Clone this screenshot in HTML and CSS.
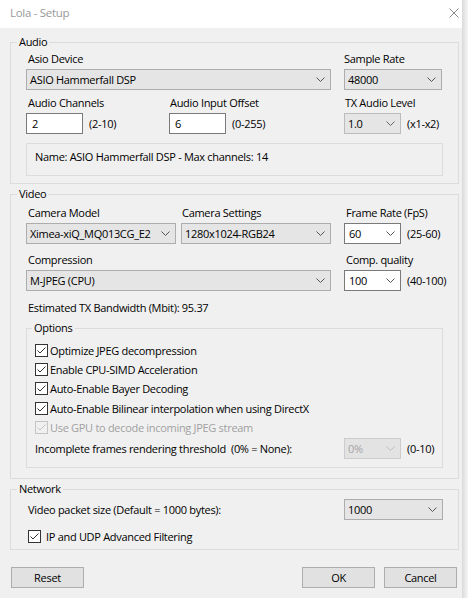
FILE: index.html
```html
<!DOCTYPE html>
<html>
<head>
<meta charset="utf-8">
<title>Lola - Setup</title>
<link rel="stylesheet" href="styles.css">
</head>
<body>
<div class="window">
  <div class="titlebar">
    <span class="title">Lola - Setup</span>
    <svg class="close" width="10" height="10" viewBox="0 0 10 10"><path d="M0.5 0.5 L9.5 9.5 M9.5 0.5 L0.5 9.5" stroke="#8a8a8a" stroke-width="1" fill="none"/></svg>
  </div>
  <div class="content">

    <section class="group audio">
      <div class="group-title">Audio</div>
      <div class="row a1">
        <div class="field w318">
          <div class="lbl">Asio Device</div>
          <div class="combo w305"><span>ASIO Hammerfall DSP</span><svg class="chev" width="9" height="5" viewBox="0 0 9 5"><polyline points="0.5,0.5 4.5,4.5 8.5,0.5" fill="none" stroke="#555"/></svg></div>
        </div>
        <div class="field">
          <div class="lbl l0">Sample Rate</div>
          <div class="combo w98"><span>48000</span><svg class="chev" width="9" height="5" viewBox="0 0 9 5"><polyline points="0.5,0.5 4.5,4.5 8.5,0.5" fill="none" stroke="#555"/></svg></div>
        </div>
      </div>
      <div class="row a2">
        <div class="field w143">
          <div class="lbl">Audio Channels</div>
          <div class="inline"><div class="textbox">2</div><span class="suffix">(2-10)</span></div>
        </div>
        <div class="field w175">
          <div class="lbl l1">Audio Input Offset</div>
          <div class="inline"><div class="textbox">6</div><span class="suffix">(0-255)</span></div>
        </div>
        <div class="field">
          <div class="lbl l1">TX Audio Level</div>
          <div class="inline"><div class="combo w57 soft"><span>1.0</span><svg class="chev" width="9" height="5" viewBox="0 0 9 5"><polyline points="0.5,0.5 4.5,4.5 8.5,0.5" fill="none" stroke="#666"/></svg></div><span class="suffix">(x1-x2)</span></div>
        </div>
      </div>
      <div class="info">Name: ASIO Hammerfall DSP - Max channels: 14</div>
    </section>

    <section class="group video">
      <div class="group-title">Video</div>
      <div class="row v1">
        <div class="field w155">
          <div class="lbl">Camera Model</div>
          <div class="combo w150"><span>Ximea-xiQ_MQ013CG_E2</span><svg class="chev" width="9" height="5" viewBox="0 0 9 5"><polyline points="0.5,0.5 4.5,4.5 8.5,0.5" fill="none" stroke="#555"/></svg></div>
        </div>
        <div class="field w163">
          <div class="lbl l1">Camera Settings</div>
          <div class="combo w150"><span>1280x1024-RGB24</span><svg class="chev" width="9" height="5" viewBox="0 0 9 5"><polyline points="0.5,0.5 4.5,4.5 8.5,0.5" fill="none" stroke="#555"/></svg></div>
        </div>
        <div class="field">
          <div class="lbl l2">Frame Rate (FpS)</div>
          <div class="inline"><div class="combo w57 edit"><span>60</span><svg class="chev" width="9" height="5" viewBox="0 0 9 5"><polyline points="0.5,0.5 4.5,4.5 8.5,0.5" fill="none" stroke="#555"/></svg></div><span class="suffix">(25-60)</span></div>
        </div>
      </div>
      <div class="row v2">
        <div class="field w318">
          <div class="lbl">Compression</div>
          <div class="combo w305"><span>M-JPEG (CPU)</span><svg class="chev" width="9" height="5" viewBox="0 0 9 5"><polyline points="0.5,0.5 4.5,4.5 8.5,0.5" fill="none" stroke="#555"/></svg></div>
        </div>
        <div class="field">
          <div class="lbl l2">Comp. quality</div>
          <div class="inline"><div class="combo w57 edit"><span>100</span><svg class="chev" width="9" height="5" viewBox="0 0 9 5"><polyline points="0.5,0.5 4.5,4.5 8.5,0.5" fill="none" stroke="#555"/></svg></div><span class="suffix">(40-100)</span></div>
        </div>
      </div>
      <div class="estimate">Estimated TX Bandwidth (Mbit): 95.37</div>

      <section class="group options">
        <div class="group-title">Options</div>
        <div class="checks">
          <div class="check-row"><svg class="cb" width="13" height="13" viewBox="0 0 13 13"><rect x="0.5" y="0.5" width="12" height="12" fill="#fff" stroke="#333"/><polyline points="2.5,6.5 5,9 10.5,3.5" fill="none" stroke="#333" stroke-width="1"/></svg><span>Optimize JPEG decompression</span></div>
          <div class="check-row"><svg class="cb" width="13" height="13" viewBox="0 0 13 13"><rect x="0.5" y="0.5" width="12" height="12" fill="#fff" stroke="#333"/><polyline points="2.5,6.5 5,9 10.5,3.5" fill="none" stroke="#333" stroke-width="1"/></svg><span>Enable CPU-SIMD Acceleration</span></div>
          <div class="check-row"><svg class="cb" width="13" height="13" viewBox="0 0 13 13"><rect x="0.5" y="0.5" width="12" height="12" fill="#fff" stroke="#333"/><polyline points="2.5,6.5 5,9 10.5,3.5" fill="none" stroke="#333" stroke-width="1"/></svg><span>Auto-Enable Bayer Decoding</span></div>
          <div class="check-row"><svg class="cb" width="13" height="13" viewBox="0 0 13 13"><rect x="0.5" y="0.5" width="12" height="12" fill="#fff" stroke="#333"/><polyline points="2.5,6.5 5,9 10.5,3.5" fill="none" stroke="#333" stroke-width="1"/></svg><span>Auto-Enable Bilinear interpolation when using DirectX</span></div>
          <div class="check-row disabled"><svg class="cb" width="13" height="13" viewBox="0 0 13 13"><rect x="0.5" y="0.5" width="12" height="12" fill="#f0f0f0" stroke="#c4c4c4"/><polyline points="2.5,6.5 5,9 10.5,3.5" fill="none" stroke="#c4c4c4" stroke-width="1"/></svg><span>Use GPU to decode incoming JPEG stream</span></div>
        </div>
        <div class="threshold">
          <span class="th-label">Incomplete frames rendering threshold&nbsp; (0% = None):</span>
          <div class="combo w57 off"><span>0%</span><svg class="chev" width="9" height="5" viewBox="0 0 9 5"><polyline points="0.5,0.5 4.5,4.5 8.5,0.5" fill="none" stroke="#bdbdbd"/></svg></div>
          <span class="suffix">(0-10)</span>
        </div>
      </section>
    </section>

    <section class="group network">
      <div class="group-title">Network</div>
      <div class="packet">
        <span class="pk-label">Video packet size (Default = 1000 bytes):</span>
        <div class="combo w99"><span>1000</span><svg class="chev" width="9" height="5" viewBox="0 0 9 5"><polyline points="0.5,0.5 4.5,4.5 8.5,0.5" fill="none" stroke="#555"/></svg></div>
      </div>
      <div class="check-row net"><svg class="cb" width="13" height="13" viewBox="0 0 13 13"><rect x="0.5" y="0.5" width="12" height="12" fill="#fff" stroke="#333"/><polyline points="2.5,6.5 5,9 10.5,3.5" fill="none" stroke="#333" stroke-width="1"/></svg><span>IP and UDP Advanced Filtering</span></div>
    </section>

    <div class="buttons">
      <div class="btn">Reset</div>
      <div class="btn ok">OK</div>
      <div class="btn cancel">Cancel</div>
    </div>
  </div>
</div>
<div class="edge"></div>
</body>
</html>
```
FILE: styles.css
```css
html, body {
  margin: 0;
  padding: 0;
}
body {
  width: 468px;
  height: 598px;
  overflow: hidden;
  background: #f0f0f0;
  display: flex;
  font-family: "Open Sans", "Noto Sans", sans-serif;
  font-size: 11px;
  letter-spacing: -0.3px;
  line-height: 15px;
  color: #000;
}
.window {
  width: 462px;
  display: flex;
  flex-direction: column;
}
.edge {
  width: 6px;
  background: linear-gradient(to right, #dadada, #f6f6f6);
}
.titlebar {
  height: 28px;
  background: #fff;
  display: flex;
  align-items: flex-start;
  justify-content: space-between;
  padding: 0 3px 0 10px;
}
.title {
  margin-top: 5px;
  color: #999;
  font-size: 11.5px;
}
.close {
  margin-top: 8px;
}
.content {
  padding: 0 3px 0 10px;
}
.group {
  border: 1px solid #dcdcdc;
  padding: 0 0 0 15px;
}
.group-title {
  margin: -9px 0 0 -9px;
  padding: 0 2px;
  background: #f0f0f0;
  width: fit-content;
  line-height: 16px;
}
.row {
  display: flex;
}
.field {
  display: flex;
  flex-direction: column;
}
.w318 { width: 318px; }
.w143 { width: 143px; }
.w175 { width: 175px; }
.w155 { width: 155px; }
.w163 { width: 163px; }
.lbl {
  height: 15px;
  margin-bottom: 3px;
  padding-left: 2px;
  white-space: nowrap;
}
.lbl.l0 { padding-left: 0; }
.lbl.l1 { padding-left: 1px; }
.lbl.l2 { padding-left: 2px; }
.inline {
  display: flex;
  align-items: center;
}
.suffix {
  margin-left: 6px;
  white-space: nowrap;
}
.combo {
  height: 21px;
  box-sizing: border-box;
  border: 1px solid #adadad;
  background: #e5e5e5;
  display: flex;
  align-items: center;
  justify-content: space-between;
  padding: 0 5px 0 3px;
  white-space: nowrap;
}
.combo.edit {
  background: #fff;
  border-color: #7a7a7a;
  padding-left: 4px;
}
.combo.soft {
  border-color: #bcbcbc;
  padding-left: 3px;
}
.combo.off {
  background: #e3e3e3;
  border-color: #cccccc;
  color: #a3a3a3;
}
.w305 { width: 305px; }
.w98 { width: 98px; }
.w57 { width: 57px; }
.w150 { width: 150px; }
.w99 { width: 99px; }
.textbox {
  width: 57px;
  height: 21px;
  box-sizing: border-box;
  border: 1px solid #7a7a7a;
  background: #fff;
  padding: 2px 0 0 5px;
}

/* Audio */
.audio {
  margin-top: 14px;
  padding-bottom: 7px;
}
.a1 { margin-top: 1px; }
.a2 { margin-top: 5px; }
.info {
  margin-top: 9px;
  width: 417px;
  height: 33px;
  box-sizing: border-box;
  border: 1px solid #dcdcdc;
  padding: 5px 0 0 8px;
}

/* Video */
.video {
  margin-top: 10px;
  padding-bottom: 10px;
}
.v1 { margin-top: 3px; }
.v2 { margin-top: 8px; }
.estimate {
  margin-top: 9px;
  padding-left: 2px;
}
.options {
  margin-top: 13px;
  width: 417px;
  box-sizing: border-box;
  padding: 0 0 8px 8px;
}
.options .group-title {
  margin-left: -3px;
}
.checks {
  margin-top: 4.5px;
}
.check-row {
  height: 19.4px;
  display: flex;
  align-items: center;
  white-space: nowrap;
}
.check-row .cb {
  flex: none;
  margin-right: 2px;
}
.check-row.disabled {
  color: #a0a0a0;
}
.threshold {
  margin-top: 0.5px;
  height: 21px;
  display: flex;
  align-items: center;
}
.th-label {
  width: 309px;
  white-space: nowrap;
}

/* Network */
.network {
  margin-top: 10px;
  padding-bottom: 3px;
}
.packet {
  margin-top: 2px;
  display: flex;
  align-items: center;
}
.pk-label {
  width: 316px;
  padding-left: 2px;
  white-space: nowrap;
}
.check-row.net {
  margin-top: 7px;
  height: 19px;
  padding-left: 2px;
}
.check-row.net .cb {
  margin-right: 5px;
}

/* Buttons */
.buttons {
  margin-top: 17px;
  display: flex;
  padding: 0 2px 0 1px;
}
.btn {
  width: 73px;
  height: 21px;
  box-sizing: border-box;
  border: 1px solid #adadad;
  background: #e1e1e1;
  text-align: center;
  line-height: 19px;
}
.btn.ok {
  margin-left: auto;
}
.btn.cancel {
  margin-left: 9px;
}
```
